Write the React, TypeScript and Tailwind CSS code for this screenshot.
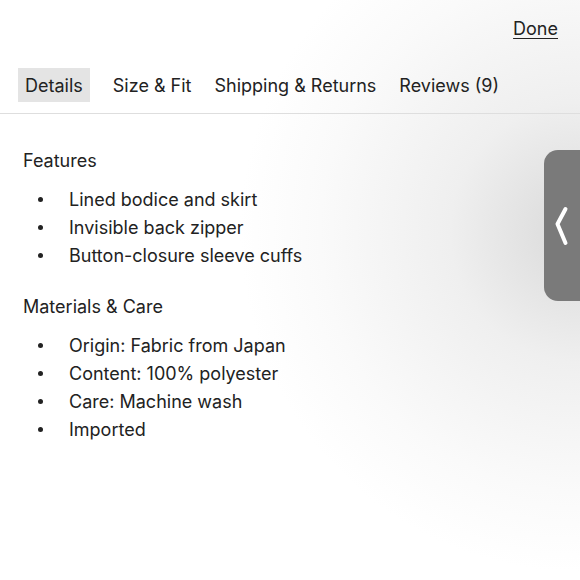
import React from 'react';

const TABS = ['Details', 'Size & Fit', 'Shipping & Returns', 'Reviews (9)'];

const SECTIONS = [
  { title: 'Features', items: ['Lined bodice and skirt', 'Invisible back zipper', 'Button-closure sleeve cuffs'] },
  { title: 'Materials & Care', items: ['Origin: Fabric from Japan', 'Content: 100% polyester', 'Care: Machine wash', 'Imported'] },
];

const App: React.FC = () => {
  return (
    <div className="relative w-[580px] h-[580px] overflow-hidden bg-[radial-gradient(circle_at_100%_40%,#d9d9d9_0px,#efefef_130px,#fafafa_260px,#ffffff_340px)] font-['Inter','Noto_Sans',sans-serif] text-[#222]">
      {/* top bar */}
      <div className="flex justify-end pt-[17px] pr-[22px]">
        <button className="text-[18px] leading-[24px] underline underline-offset-[3px] decoration-1">Done</button>
      </div>

      {/* tabs */}
      <div className="mt-[27px] flex items-center gap-[9px] pl-[18px] pb-[11px] border-b border-[#dedede]">
        {TABS.map((t, i) => (
          <div key={t} className={`px-[7px] h-[34px] flex items-center text-[18px] ${i === 0 ? 'bg-[#e4e4e4] mr-[7px]' : ''}`}>
            {t}
          </div>
        ))}
      </div>

      {/* content */}
      <div className="pl-[23px] pt-[35px]">
        {SECTIONS.map((s, si) => (
          <div key={s.title} className={si > 0 ? 'mt-[26px]' : ''}>
            <h3 className="text-[18px] leading-[24px]">{s.title}</h3>
            <ul className="mt-[12px]">
              {s.items.map(item => (
                <li key={item} className="flex items-center h-[28px] text-[18px]">
                  <span className="w-[5px] h-[5px] rounded-full bg-[#222] ml-[15px] mr-[26px]"></span>
                  {item}
                </li>
              ))}
            </ul>
          </div>
        ))}
      </div>

      {/* side handle */}
      <div className="absolute right-0 top-[150px] w-[36px] h-[151px] rounded-l-[14px] bg-[#7a7a7a] flex items-center justify-center">
        <svg width="36" height="151" viewBox="0 0 36 151">
          <path d="M21.5 59 L13.5 74 L21.5 93" fill="none" stroke="#fff" strokeWidth="4" strokeLinecap="round" strokeLinejoin="round" />
        </svg>
      </div>
    </div>
  );
};

export default App;
